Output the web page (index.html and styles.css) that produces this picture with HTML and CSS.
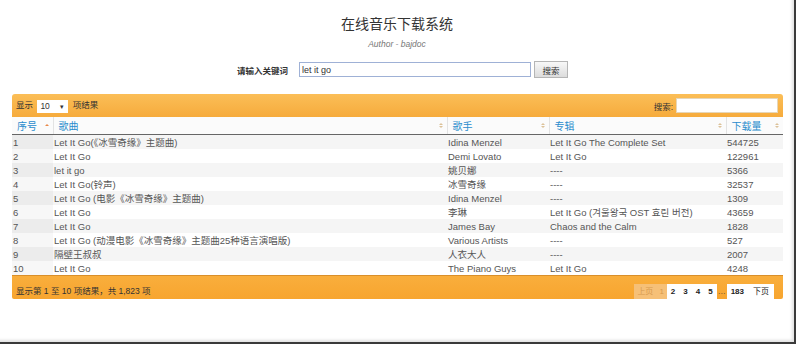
FILE: index.html
```html
<!DOCTYPE html>
<html>
    <head>
        <meta name="viewport" content="width=device-width, initial-scale=1.0">
        <meta charset="utf-8">
        <title>在线音乐下载系统</title>
        <link rel="stylesheet" href="styles.css">
    </head>
    <body>
        <div class="frame">
            <div class="head">
                <h1>在线音乐下载系统</h1>
                <div class="author">Author - bajdoc</div>
                <div class="search">
                    <label>请输入关键词</label>
                    <input class="kw" type="text" value="let it go">
                    <button class="btn">搜索</button>
                </div>
            </div>
            <div class="panel">
                <div class="bar top">
                    <div class="length">显示 <span class="sel">10 <i>▾</i></span> 项结果</div>
                    <div class="filter">搜索: <span class="box"></span></div>
                </div>
                <table class="grid">
                    <colgroup>
                        <col style="width:41px"><col style="width:394px"><col style="width:102px"><col style="width:177px"><col style="width:57px">
                    </colgroup>
                    <thead>
                        <tr>
                            <th class="asc">序号<span class="ic"></span></th>
                            <th>歌曲<span class="ic"></span></th>
                            <th>歌手<span class="ic"></span></th>
                            <th>专辑<span class="ic"></span></th>
                            <th>下载量<span class="ic"></span></th>
                        </tr>
                    </thead>
                    <tbody>
                        <tr><td>1</td><td>Let It Go(《冰雪奇缘》主题曲)</td><td>Idina Menzel</td><td>Let It Go The Complete Set</td><td>544725</td></tr>
                        <tr><td>2</td><td>Let It Go</td><td>Demi Lovato</td><td>Let It Go</td><td>122961</td></tr>
                        <tr><td>3</td><td>let it go</td><td>姚贝娜</td><td>----</td><td>5366</td></tr>
                        <tr><td>4</td><td>Let It Go(铃声)</td><td>冰雪奇缘</td><td>----</td><td>32537</td></tr>
                        <tr><td>5</td><td>Let It Go (电影《冰雪奇缘》主题曲)</td><td>Idina Menzel</td><td>----</td><td>1309</td></tr>
                        <tr><td>6</td><td>Let It Go</td><td>李琳</td><td>Let It Go (겨울왕국 OST 효린 버전)</td><td>43659</td></tr>
                        <tr><td>7</td><td>Let It Go</td><td>James Bay</td><td>Chaos and the Calm</td><td>1828</td></tr>
                        <tr><td>8</td><td>Let It Go (动漫电影《冰雪奇缘》主题曲25种语言演唱版)</td><td>Various Artists</td><td>----</td><td>527</td></tr>
                        <tr><td>9</td><td>隔壁王叔叔</td><td>人衣大人</td><td>----</td><td>2007</td></tr>
                        <tr><td>10</td><td>Let It Go</td><td>The Piano Guys</td><td>Let It Go</td><td>4248</td></tr>
                    </tbody>
                </table>
                <div class="bar bottom">
                    <div class="info">显示第 1 至 10 项结果，共 1,823 项</div>
                    <div class="paging">
                        <span class="off">上页</span><span class="off">1</span><span class="pg">2</span><span class="pg">3</span><span class="pg">4</span><span class="pg">5</span><span class="dots">…</span><span class="pg">183</span><span class="pg wide">下页</span>
                    </div>
                </div>
            </div>
        </div>
    </body>
</html>
```

FILE: styles.css
```css
body{
    margin:0;
    background-color:#fff;
    font-family:"Liberation Sans","Noto Sans CJK SC",sans-serif;
    color:#444;
}
.frame{
    width:794px;
    height:342px;
    border-right:2px solid #3a3a3a;
    border-bottom:2px solid #3a3a3a;
    box-shadow:inset -3px -3px 3px -1px rgba(0,0,0,.12);
}
.head{
    padding-top:15px;
    text-align:center;
}
h1{
    margin:0;
    font-size:14px;
    line-height:18px;
    font-weight:normal;
    color:#333;
}
.author{
    margin-top:5px;
    font-size:8.5px;
    line-height:12px;
    font-style:italic;
    color:#777;
}
.search{
    margin-top:11px;
    height:17px;
    display:flex;
    align-items:center;
    padding-left:237px;
}
.search label{
    font-size:8.5px;
    font-weight:bold;
    color:#333;
    margin-right:11px;
}
.kw{
    box-sizing:border-box;
    width:232px;
    height:15px;
    margin:0;
    padding:0 2px;
    border:1px solid #9fb1d6;
    font-family:inherit;
    font-size:9px;
    color:#333;
    outline:none;
}
.btn{
    box-sizing:border-box;
    width:34px;
    height:17px;
    margin:0 0 0 3px;
    padding:0;
    border:1px solid #b5b5b5;
    background:linear-gradient(#f8f8f8,#dcdcdc);
    font-family:inherit;
    font-size:8.5px;
    color:#333;
}
.panel{
    margin:16px 0 0 12px;
    width:771px;
}
.bar{
    display:flex;
    justify-content:space-between;
    font-size:8.5px;
    color:#333;
}
.bar.top{
    height:23px;
    align-items:center;
    padding:0 5px 0 4px;
    background:linear-gradient(#fbbe57,#f6ab3c);
    border-radius:3px 3px 0 0;
}
.sel{
    display:inline-block;
    width:31px;
    height:13px;
    line-height:13px;
    margin:0 2px;
    padding-left:3px;
    box-sizing:border-box;
    background-color:#fff;
    vertical-align:middle;
    position:relative;
}
.sel i{
    font-style:normal;
    font-size:7px;
    position:absolute;
    right:4px;
    top:0;
}
.filter{
    display:flex;
    align-items:center;
}
.filter .box{
    display:inline-block;
    width:102px;
    height:15px;
    margin-left:3px;
    box-sizing:border-box;
    background-color:#fff;
    border:1px solid #e6d6b8;
}
.grid{
    width:771px;
    table-layout:fixed;
    border-collapse:collapse;
    font-size:9.5px;
}
.grid th{
    height:17px;
    padding:0 10px 0 5px;
    text-align:left;
    font-weight:normal;
    font-size:10px;
    color:#2a8ccd;
    background-color:#fbfbfb;
    border-left:1px solid #e3e3e3;
    border-bottom:1px solid #666;
    position:relative;
}
.grid th:first-child{
    border-left:none;
}
.ic{
    position:absolute;
    right:4px;
    top:6px;
    width:0;
    height:0;
    border-left:2px solid transparent;
    border-right:2px solid transparent;
    border-bottom:2px solid #dcc29a;
}
.ic::after{
    content:"";
    position:absolute;
    left:-2px;
    top:3px;
    border-left:2px solid transparent;
    border-right:2px solid transparent;
    border-top:2px solid #dcc29a;
}
.asc .ic{
    top:7px;
    border-bottom-color:#e9894a;
}
.asc .ic::after{
    display:none;
}
.grid td{
    height:14px;
    padding:0 1px 0 1px;
    white-space:nowrap;
    overflow:hidden;
    color:#555;
}
.grid td:first-child{
    background-color:#f7f7f7;
}
.grid tbody tr:nth-child(odd) td{
    background-color:#f5f5f5;
}
.grid tbody tr:nth-child(odd) td:first-child{
    background-color:#ececec;
}
.bar.bottom{
    height:23px;
    align-items:flex-end;
    padding-left:4px;
    background:linear-gradient(#f9ae3c,#f7a52f);
    border-top:1px solid #d98f2a;
    border-radius:0 0 2px 2px;
}
.info{
    padding-bottom:3px;
}
.paging{
    display:flex;
    align-items:flex-end;
    margin-right:9px;
    height:15px;
}
.paging span{
    display:inline-block;
    height:15px;
    line-height:15px;
    padding:0 3px;
    font-size:8px;
}
.paging .off{
    background-color:#f6c077;
    color:#d69a4e;
}
.paging .pg{
    background-color:#fff;
    color:#222;
    font-weight:bold;
    padding:0 4px;
}
.paging .pg.wide{
    font-weight:normal;
    padding:0 5px;
}
.paging .dots{
    color:#333;
    padding:0 1px;
}
```
